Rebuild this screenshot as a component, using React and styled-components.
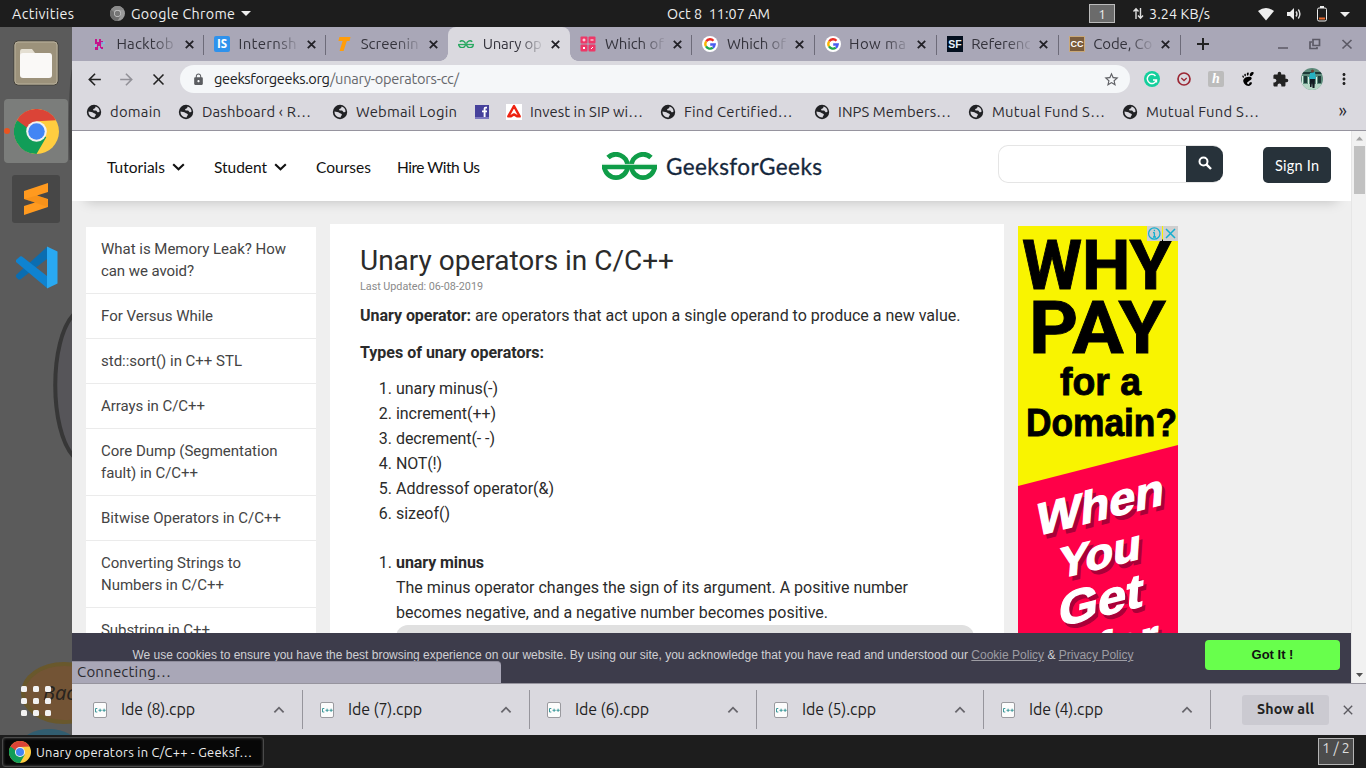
import React, { useLayoutEffect, useRef } from "react";
import styled, { createGlobalStyle, css } from "styled-components";
import {
  MdArrowBack,
  MdArrowForward,
  MdClose,
  MdAdd,
  MdLock,
  MdStarBorder,
  MdExtension,
  MdMoreVert,
} from "react-icons/md";
import { SiGnome } from "react-icons/si";

const ui = `Ubuntu, "Noto Sans", sans-serif`;
const geo = `"Sofia Pro", Lato, sans-serif`;
const c = {
  panel: "#1d1d1d",
  frame: "#a9a7b7",
  bar: "#dad9df",
  ink: "#2c2b30",
  dark: "#27323a",
};

const Global = createGlobalStyle`
  * { box-sizing: border-box; }
  body { margin: 0; width: 1366px; height: 768px; overflow: hidden; background: ${c.panel}; }
  svg { display: block; flex: none; }
`;

/* Text that tracks itself in or out to occupy a known width */
const FitSpan = styled.span`
  display: inline-block;
  justify-self: start;
  white-space: pre;
  flex: none;
`;
function Fit({ w, children }) {
  const ref = useRef(null);
  useLayoutEffect(() => {
    const el = ref.current;
    el.style.letterSpacing = "0px";
    const natural = el.getBoundingClientRect().width;
    const n = el.textContent.length;
    const gap = (w - natural) / Math.max(1, n - 1);
    el.style.letterSpacing = `${gap}px`;
    el.style.marginRight = `${-gap}px`;
  }, [w, children]);
  return <FitSpan ref={ref}>{children}</FitSpan>;
}

/* ---------- desktop ---------- */
const Desktop = styled.div`
  width: 1366px;
  height: 768px;
  display: flex;
  flex-direction: column;
  font-family: ${ui};
  overflow: hidden;
`;
const TopPanel = styled.header`
  height: 27px;
  flex: none;
  background: ${c.panel};
  color: #eee;
  font-size: 14.3px;
  display: grid;
  grid-template-columns: 98px 557px 1fr auto;
  align-items: center;
  padding: 0 14px 0 12px;
  line-height: 26px;
`;
const PanelGroup = styled.div`
  display: flex;
  align-items: center;
  gap: ${(p) => p.$gap || 0}px;
`;
const Caret = styled.i`
  width: 0;
  height: 0;
  border: 5px solid transparent;
  border-top-color: #eee;
  border-bottom: 0;
`;
const Workspace = styled.div`
  width: 26px;
  height: 19px;
  margin-right: 17px;
  border: 1px solid #bbb;
  background: #6b6b6b;
  text-align: center;
  line-height: 18px;
  font-size: 13.5px;
`;
const Middle = styled.div`
  height: 708px;
  flex: none;
  display: flex;
`;
const Dock = styled.aside`
  position: relative;
  width: 72px;
  background: #5b5b5b;
  display: flex;
  flex-direction: column;
  align-items: center;
  overflow: hidden;
`;
const Wallpaper = styled.svg`
  position: absolute;
  left: 0;
  top: 0;
`;
const DockTile = styled.div`
  position: relative;
  width: 64px;
  height: 64px;
  margin-top: 4px;
  border-radius: 4px;
  background: ${(p) => (p.$active ? "#7b7d7b" : "none")};
  display: flex;
  align-items: center;
  justify-content: center;
`;
const RunningDot = styled.i`
  position: absolute;
  left: 0;
  top: 29px;
  width: 6px;
  height: 6px;
  border-radius: 3px;
  background: #e95420;
`;
const AppsGrid = styled.div`
  position: relative;
  display: grid;
  grid-template-columns: repeat(3, 6px);
  grid-auto-rows: 6px;
  gap: 6px;
  margin: auto 0 19px;
  i { background: #f2f2f2; border-radius: 1.5px; }
`;

/* ---------- browser chrome ---------- */
const Browser = styled.main`
  width: 1294px;
  height: 708px;
  display: flex;
  flex-direction: column;
  background: ${c.bar};
`;
const TabStrip = styled.div`
  height: 34px;
  flex: none;
  background: ${c.frame};
  display: flex;
  padding-left: 10px;
`;
const TabBox = styled.div`
  position: relative;
  width: 122.1px;
  height: 34px;
  flex: none;
  display: flex;
  align-items: center;
  padding-left: 10px;
  font-size: 15px;
  color: #34333c;
  ${(p) =>
    p.$sep &&
    css`
      &::after {
        content: "";
        position: absolute;
        right: 0;
        top: 8px;
        width: 1px;
        height: 20px;
        background: #6d6b79;
      }
    `}
  ${(p) =>
    p.$active &&
    css`
      background: ${c.bar};
      border-radius: 8px 8px 0 0;
      &::before,
      &::after {
        content: "";
        position: absolute;
        bottom: 0;
        width: 8px;
        height: 8px;
      }
      &::before {
        left: -8px;
        background: radial-gradient(circle at 0 0, ${c.frame} 7.5px, ${c.bar} 8px);
      }
      &::after {
        right: -8px;
        background: radial-gradient(circle at 100% 0, ${c.frame} 7.5px, ${c.bar} 8px);
      }
    `}
`;
const TabLabel = styled.div`
  width: 59px;
  margin: 0 9px 0 8.5px;
  overflow: hidden;
  white-space: nowrap;
  line-height: 24px;
  mask-image: linear-gradient(90deg, #000 60%, transparent 105%);
`;
const NewTab = styled.div`
  margin: 8px 0 0 13px;
`;
const WindowButtons = styled.div`
  margin-left: auto;
  margin-right: 13px;
  padding-top: 11px;
`;
const Toolbar = styled.div`
  height: 36px;
  flex: none;
  display: flex;
  align-items: center;
  padding-left: 13px;
  color: #222;
`;
const NavButton = styled.div`
  width: 32px;
  height: 32px;
  display: flex;
  align-items: center;
  color: ${(p) => (p.$off ? "#929198" : "#222")};
`;
const Omnibox = styled.div`
  width: 950px;
  height: 28px;
  flex: none;
  margin: 0 6px 0 -1px;
  border-radius: 14px;
  background: #f5f7f9;
  display: flex;
  align-items: center;
  padding: 0 10px 0 12px;
  font-size: 14.6px;
  line-height: 26px;
  color: #202124;
  > :last-child { margin-left: auto; color: #5f6065; }
`;
const UrlText = styled.div`
  display: flex;
  margin-left: 9px;
  color: ${(p) => p.$color};
  & + & { margin-left: 0; }
`;
const Ext = styled.div`
  width: 32px;
  flex: none;
  display: flex;
  justify-content: center;
`;
const Honey = styled.div`
  width: 16px;
  height: 16px;
  border-radius: 2px;
  background: #bcbcbc;
  color: #fff;
  font: italic bold 14px/15px "Liberation Serif", serif;
  text-align: center;
`;
const Bookmarks = styled.div`
  height: 34px;
  flex: none;
  border-bottom: 1px solid #96949e;
  display: flex;
  align-items: flex-start;
  padding-left: 14px;
  padding-top: 4px;
  color: ${c.ink};
`;
const Bookmark = styled.div`
  height: 22px;
  display: flex;
  align-items: center;
  gap: 8px;
  margin-right: ${(p) => (p.$iconOnly ? 16 : 17)}px;
  font-size: 14.8px;
`;
const BookmarkLabel = styled.div`
  width: ${(p) => p.$w}px;
  white-space: nowrap;
  line-height: 22px;
`;
const More = styled.div`
  margin-left: auto;
  margin-right: 19px;
  font-size: 18px;
  line-height: 19px;
`;

/* ---------- web page ---------- */
const Viewport = styled.div`
  position: relative;
  height: 552px;
  flex: none;
  display: flex;
  background: #efefef;
`;
const Page = styled.div`
  width: 1279px;
  height: 552px;
  overflow: hidden;
`;
const SiteHeader = styled.div`
  position: relative;
  height: 70px;
  background: #fff;
  box-shadow: 0 14px 12px -14px rgba(0, 0, 0, 0.22);
  display: flex;
  align-items: center;
  padding: 0 20px 0 35px;
  font-family: ${geo};
  font-size: 15.5px;
  color: #111;
`;
const NavItem = styled.div`
  display: flex;
  align-items: center;
  gap: 7px;
  width: ${(p) => p.$w}px;
  padding-top: 2px;
  line-height: 24px;
`;
const Brand = styled.div`
  display: flex;
  align-items: center;
  gap: 9px;
  width: 396px;
  font-size: 22.5px;
  font-weight: 400;
  color: #15273c;
  -webkit-text-stroke: 0.3px #15273c;
`;
const SearchBox = styled.div`
  width: 225px;
  height: 38px;
  margin-top: -5px;
  border: 1px solid #e5e5e5;
  border-right-width: 0;
  border-radius: 10px;
  display: flex;
  justify-content: flex-end;
  overflow: hidden;
`;
const SearchButton = styled.div`
  width: 37px;
  height: 37px;
  margin-top: -1px;
  background: ${c.dark};
  display: flex;
  align-items: center;
  justify-content: center;
`;
const SignIn = styled.div`
  width: 68px;
  height: 36px;
  margin-left: auto;
  margin-top: -3px;
  border-radius: 5px;
  background: ${c.dark};
  color: #fff;
  text-align: center;
  line-height: 37px;
  font-size: 14.5px;
`;
const Columns = styled.div`
  display: flex;
  gap: 14px;
  padding-left: 14px;
  align-items: flex-start;
  font-family: Roboto, sans-serif;
`;
const Sidebar = styled.nav`
  width: 230px;
  margin-top: 26px;
  background: #fff;
`;
const SideLink = styled.div`
  padding: 11px 0 11px 15px;
  border-bottom: 1px solid #ebebeb;
  font-size: 15px;
  line-height: 22px;
  color: #444;
`;
const Article = styled.article`
  width: 674px;
  height: 500px;
  margin-top: 23px;
  padding: 22px 30px 0;
  background: #fff;
  color: #2b2b2b;
  font-size: 16px;
  line-height: 25px;
`;
const Title = styled.h1`
  margin: 0;
  font-size: 28px;
  font-weight: 400;
  line-height: 30px;
`;
const Updated = styled.div`
  margin-top: 4px;
  font-size: 10.8px;
  line-height: 14px;
  color: #8a8a8a;
`;
const Para = styled.p`
  margin: ${(p) => p.$top}px 0 0;
  white-space: nowrap;
`;
const List = styled.ol`
  margin: ${(p) => p.$top}px 0 0;
  padding-left: 36px;
`;
const CodeBox = styled.div`
  width: 578px;
  height: 60px;
  border-radius: 12px;
  background: #e0e0e0;
`;
const AdFrame = styled.div`
  position: relative;
  width: 160px;
  height: 420px;
  margin-top: 25px;
`;
const AdChoices = styled.div`
  position: absolute;
  top: 0;
  right: 0;
  display: flex;
  gap: 1px;
  svg { background: #cfcfcf; }
`;
const Scrollbar = styled.div`
  width: 15px;
  border-left: 1px solid #e6e6e6;
  background: #f1f1f1;
  display: flex;
  flex-direction: column;
  align-items: center;
`;
const ScrollThumb = styled.div`
  width: 11px;
  height: 48px;
  margin: 5px 0 auto;
  background: #c1c1c1;
`;
const CookieBar = styled.div`
  position: absolute;
  left: 0;
  bottom: 0;
  width: 1279px;
  height: 50px;
  background: #3d3c4b;
  color: #d0d0d4;
  font: 12px/14px "Liberation Sans", sans-serif;
  display: flex;
  padding: 7px 11px 0 60.5px;
  justify-content: space-between;
`;
const CookieText = styled.div`
  padding-top: 8px;
  u { color: #9d9ca3; }
`;
const GotIt = styled.div`
  width: 135px;
  height: 30px;
  border-radius: 4px;
  background: #68ff4c;
  color: #111;
  font-weight: bold;
  font-size: 13px;
  line-height: 30px;
  text-align: center;
`;
const Status = styled.div`
  position: absolute;
  left: 0;
  bottom: 0;
  width: 429px;
  height: 22px;
  border-radius: 0 4px 0 0;
  border-top: 1px solid #8f8d9c;
  background: ${c.frame};
  padding-left: 5px;
  font-size: 15px;
  line-height: 20px;
  color: ${c.ink};
`;

/* ---------- downloads and task bar ---------- */
const Downloads = styled.div`
  height: 52px;
  flex: none;
  border-top: 1px solid #96949e;
  display: flex;
  align-items: center;
  padding-left: 4px;
  color: #222;
`;
const Download = styled.div`
  width: 227px;
  height: 39px;
  border-right: 1px solid #96959c;
  display: flex;
  align-items: center;
  padding: 0 17px;
  font-size: 16px;
  line-height: 20px;
  > span { margin: -2px 0 0 14px; }
  > svg:last-child { margin-left: auto; }
`;
const ShowAll = styled.div`
  width: 87px;
  height: 30px;
  margin: 0 11px 0 31px;
  border-radius: 3px;
  background: #cbcad1;
  font-size: 14.3px;
  font-weight: 600;
  line-height: 28px;
  text-align: center;
`;
const TaskBar = styled.footer`
  height: 33px;
  background: ${c.panel};
  display: flex;
  justify-content: space-between;
  padding: 2px 12px 0 2px;
`;
const Task = styled.div`
  width: 262px;
  height: 30px;
  border: 1px solid #4a4a4a;
  border-radius: 3px;
  background: #070707;
  box-shadow: inset 0 0 3px #555;
  color: #eee;
  display: flex;
  align-items: center;
  gap: 5px;
  padding-left: 6px;
  font-size: 12.9px;
`;
const Pager = styled.div`
  width: 36px;
  height: 27px;
  margin-top: 1px;
  border: 1px solid #b5b5b5;
  background: #4c4c4c;
  color: #ddd;
  font-size: 14px;
  line-height: 19px;
  text-align: center;
`;

/* ---------- drawings ---------- */
const ChromeLogo = ({ size, mono }) => (
  <svg width={size} height={size} viewBox="0 0 48 48">
    <circle cx="24" cy="24" r="24" fill={mono ? "#9a9a9a" : "#ffcd40"} />
    <path d="M24 24L3.2 12A24 24 0 0 0 24 48L34.4 30Z" fill={mono ? "#6e6e6e" : "#119d58"} />
    <path d="M24 24H13.6L3.2 12A24 24 0 0 1 44.8 12L24 13Z" fill={mono ? "#8a8a8a" : "#db4437"} />
    <path d="M13.6 30L3.2 12L14 20Z" fill={mono ? "#6e6e6e" : "#119d58"} />
    <circle cx="24" cy="24" r="11" fill={mono ? "#ccc" : "#f1f1f1"} />
    <circle cx="24" cy="24" r="8.8" fill={mono ? "#777" : "#4285f4"} />
  </svg>
);
const Gfg = ({ w, h, color = "#0f9d48", weight = 4.8 }) => (
  <svg width={w} height={h} viewBox="0 0 55 28">
    <g fill="none" stroke={color} strokeWidth={weight}>
      <path d="M6 5.6A11.6 11.6 0 0 1 25.6 14A11.6 11.6 0 0 1 2.4 14" />
      <path d="M49 5.6A11.6 11.6 0 0 0 29.4 14A11.6 11.6 0 0 0 52.6 14" />
    </g>
    <path d="M0 12.8H55V17.2H0Z" fill={color} />
    <path d="M0 12.4H55" stroke="#b9e2c8" />
  </svg>
);
const GoogleG = () => (
  <svg width="16" height="16" viewBox="0 0 16 16">
    <circle cx="8" cy="8" r="8" fill="#fff" />
    <g fill="none" strokeWidth="2.3">
      <path d="M11.5 4.7A4.7 4.7 0 0 0 4.2 5.3" stroke="#ea2f25" />
      <path d="M4.2 5.3A4.7 4.7 0 0 0 4 10.4" stroke="#fbb500" />
      <path d="M4 10.4A4.7 4.7 0 0 0 10.8 11.8" stroke="#20a94c" />
      <path d="M10.8 11.8A4.7 4.7 0 0 0 12.7 8.5H8.2" stroke="#4a5cf0" />
    </g>
  </svg>
);
const Favicon = ({ kind }) => {
  if (kind === "gfg") return <Gfg w={16} h={8.5} color="#20a45b" />;
  if (kind === "google") return <GoogleG />;
  return (
    <svg width="16" height="16" viewBox="0 0 16 16">
      {kind === "hack" && (
        <>
          <path d="M3 3H5V6H7V3H9V5H11V8H9V11H11V13H8V10H6V14H3V11H5V8H3Z" fill="#c4158c" />
          <path d="M9 7H13M7 13H9M2 10H4M10 9H11" stroke="#7bc6ea" strokeWidth="1.4" />
        </>
      )}
      {kind === "is" && (
        <>
          <rect width="16" height="16" rx="2" fill="#2f92ec" />
          <text x="8" y="12.2" textAnchor="middle" fontSize="11.5" fontWeight="700" fontFamily="Open Sans" fill="#fff">IS</text>
        </>
      )}
      {kind === "t" && <path d="M3.5 1H14.5L13.5 5H10.8L7.6 15H3.6L6.6 5H2.4Z" fill="#ff9d0a" />}
      {kind === "calc" && (
        <>
          <g fill="#ee3767">
            <rect x=".5" y=".5" width="7" height="7" rx="1" />
            <rect x="8.5" y=".5" width="7" height="7" rx="1" />
            <rect x=".5" y="8.5" width="7" height="7" rx="1" />
            <rect x="8.5" y="8.5" width="7" height="7" rx="1" />
          </g>
          <path d="M2.5 4H5.5M4 2.5V5.5M10.5 4H13.5M3 11L5 13M5 11L3 13M11 13L13 11" stroke="#fff" />
        </>
      )}
      {kind === "sf" && (
        <>
          <rect width="16" height="16" fill="#04101f" />
          <text x="8" y="11.6" textAnchor="middle" fontSize="10.5" fontWeight="700" fontFamily="Liberation Sans" fill="#e6f2fb">SF</text>
        </>
      )}
      {kind === "cc" && (
        <>
          <rect x=".5" y=".5" width="15" height="15" fill="#7a5c3c" stroke="#c9a878" />
          <text x="8" y="10.8" textAnchor="middle" fontSize="9" fontWeight="700" fontFamily="Liberation Sans" fill="#fff">CC</text>
        </>
      )}
    </svg>
  );
};
const TabClose = () => (
  <svg width="9" height="9" viewBox="0 0 9 9" stroke="#222127" strokeWidth="1.8">
    <path d="M.8.8L8.2 8.2M8.2.8L.8 8.2" />
  </svg>
);
const Globe = () => (
  <svg width="16" height="16" viewBox="0 0 16 16">
    <circle cx="8" cy="8" r="7.2" fill="#202124" />
    <path d="M9.6 2.6C12 3.2 13.5 5.3 13.6 7.6C12.8 8.6 11.5 8.4 11 7.4C10.4 6.4 9.2 6.6 8 6.5C6.8 6.4 6.8 5.2 7.8 4.8C8.8 4.5 9.6 3.8 9.6 2.6Z" fill={c.bar} />
    <path d="M2.5 7.6C4 8.2 6.4 8 7.2 8.8C8 9.7 9.8 9.4 9.9 10.6C9.9 11.8 8.8 12 8.6 13.5C5.2 13.7 2.4 11.2 2.5 7.6Z" fill={c.bar} />
  </svg>
);
const Magnifier = () => (
  <svg width="14" height="14" viewBox="0 0 14 14" fill="none" stroke="#fff" strokeWidth="2">
    <circle cx="5.5" cy="5.5" r="4" />
    <path d="M8.4 8.4L13 13" strokeWidth="2.4" />
  </svg>
);
const Chevron = ({ up }) => (
  <svg width={up ? 12 : 13} height="8" viewBox="0 0 13 8" fill="none">
    <path
      d={up ? "M1.5 6.5L6.5 1.5L11.5 6.5" : "M1.2 1.2L6.5 6.3L11.8 1.2"}
      stroke={up ? "#66656b" : "#111"}
      strokeWidth={up ? 1.9 : 2.1}
    />
  </svg>
);
const CppIcon = () => (
  <svg width="14" height="16" viewBox="0 0 14 16">
    <rect x=".5" y=".5" width="13" height="15" rx="1.5" fill="#fcfcfc" stroke="#9a9a9f" />
    <path d="M4.3 6.5H2.5V10H4.3M5.5 8.3H8.7M7.1 6.7V9.9M9.5 8.3H12.7M11.1 6.7V9.9" fill="none" stroke="#3e9a9c" />
  </svg>
);

function TopBar() {
  return (
    <TopPanel>
      <Fit w={62}>Activities</Fit>
      <PanelGroup $gap={6}>
        <ChromeLogo size={15} mono />
        <Fit w={104}>Google Chrome</Fit>
        <Caret />
      </PanelGroup>
      <Fit w={103}>Oct 8  11:07 AM</Fit>
      <PanelGroup>
        <Workspace>1</Workspace>
        <PanelGroup $gap={4}>
          <svg width="13" height="13" viewBox="0 0 13 13" fill="none" stroke="#e0e0e0" strokeWidth="1.4">
            <path d="M4 12V2M1.5 4.5L4 1.7L6.5 4.5M8.5 1V11M6 8.5L8.5 11.3L11 8.5" />
          </svg>
          <Fit w={61}>3.24 KB/s</Fit>
        </PanelGroup>
        <svg width="142" height="20" viewBox="0 0 142 20" fill="#eee">
          <path d="M48 7Q56 1 64 7L56 16.5Z" />
          <path d="M77 8H80L84 4V16L80 12H77Z" />
          <path d="M86 7.5Q88 10 86 12.5M88.3 5.5Q91.5 10 88.3 14.5" fill="none" stroke="#ddd" strokeWidth="1.4" />
          <rect x="107.5" y="4" width="9" height="13" rx="1.5" fill="none" stroke="#eee" />
          <path d="M110 2H114V4H110Z" />
          <path d="M109 13.5H115V15.5H109Z" fill="#e8692c" />
          <path d="M130 8H140L135 13Z" />
        </svg>
      </PanelGroup>
    </TopPanel>
  );
}

function SideDock() {
  return (
    <Dock>
      <Wallpaper width="72" height="708" viewBox="0 27 72 708">
        <path d="M74 314C49 340 49 430 74 457" fill="#565559" stroke="#373737" strokeWidth="4" />
        <path d="M73 70Q69 100 71 160" stroke="#444" strokeWidth="3" fill="none" />
        <ellipse cx="64" cy="693" rx="41" ry="29" fill="#735435" stroke="#69582c" strokeWidth="4" />
        <ellipse cx="49" cy="745" rx="28" ry="16" fill="#315d70" />
        <text x="43" y="700" fontFamily="Noto Sans" fontSize="20" fontStyle="italic" fill="#29241f">Bac</text>
      </Wallpaper>
      <DockTile>
        <svg width="46" height="46" viewBox="0 0 46 46">
          <rect x="1" y="1" width="44" height="44" rx="4" fill="#9c927b" stroke="#45423b" />
          <rect x="2" y="2" width="42" height="42" rx="3" fill="none" stroke="#b9b19d" />
          <path d="M7 12Q7 9 9 9H19L22 13H36Q38 13 38 15V22H7Z" fill="#e4dfd2" />
          <rect x="7" y="13" width="32" height="25" rx="3" fill="#faf9f7" />
        </svg>
      </DockTile>
      <DockTile $active>
        <RunningDot />
        <ChromeLogo size={45} />
      </DockTile>
      <DockTile>
        <svg width="48" height="48" viewBox="0 0 48 48">
          <rect width="48" height="48" rx="3" fill="#474747" />
          <path d="M12 16L36 8V17L25 20.5L36 24V32L12 40V31L23 27.5L12 24Z" fill="#ff9a1f" />
          <path d="M12 24L36 32V26Q36 24.5 34 23.5L25 20.5Z" fill="#e88412" opacity=".35" />
        </svg>
      </DockTile>
      <DockTile>
        <svg width="43" height="43" viewBox="0 0 43 43">
          <path d="M1 29L32 1V13L6 33Q4 34 3 33L1 31Z" fill="#0b6db0" />
          <path d="M1 14L5 10.5Q6 10 7 10.5L32 30V42L1 16Z" fill="#0f83d0" />
          <path d="M32 .5L42.5 5.5V37.5L32 42.5Z" fill="#29a9f2" />
        </svg>
      </DockTile>
      <AppsGrid>{Array.from({ length: 9 }, (_, i) => <i key={i} />)}</AppsGrid>
    </Dock>
  );
}

const tabs = [
  ["hack", "Hacktob", 57, true],
  ["is", "Internsh", 58, true],
  ["t", "Screenin", 58],
  ["gfg", "Unary op", 59, false, true],
  ["calc", "Which of", 59, true],
  ["google", "Which of", 59, true],
  ["google", "How ma", 57, true],
  ["sf", "Referenc", 60, true],
  ["cc", "Code, Co", 59, true],
];

const bookmarks = [
  ["globe", "domain", 51, 51],
  ["globe", "Dashboard ‹ R…", 109, 113],
  ["globe", "Webmail Login", 101, 101],
  ["fb"],
  ["sip", "Invest in SIP wi…", 113, 113],
  ["globe", "Find Certified…", 108, 113],
  ["globe", "INPS Members…", 113, 113],
  ["globe", "Mutual Fund S…", 113, 113],
  ["globe", "Mutual Fund S…", 113, 113],
];

function BookmarkIcon({ kind }) {
  if (kind === "globe") return <Globe />;
  return (
    <svg width="16" height="16" viewBox="0 0 16 16">
      {kind === "fb" ? (
        <>
          <rect x="1" y="1" width="14" height="14" fill="#46419b" />
          <path d="M1 13H15V15H1Z" fill="#7d79c0" />
          <path d="M13 3.6H11.6Q10.6 3.6 10.6 4.8V13M8 7.4H13" fill="none" stroke="#fff" strokeWidth="1.9" />
        </>
      ) : (
        <>
          <rect width="16" height="16" fill="#fff" />
          <path d="M8 2L2.3 12.4H4.6L8 10.4L11.4 12.4H13.7Z" fill="none" stroke="#ee2211" strokeWidth="2.4" strokeLinejoin="round" />
        </>
      )}
    </svg>
  );
}

function BrowserChrome() {
  return (
    <>
      <TabStrip>
        {tabs.map(([icon, label, w, sep, active], i) => (
          <TabBox key={i} $sep={sep} $active={active}>
            <Favicon kind={icon} />
            <TabLabel><Fit w={w}>{label}</Fit></TabLabel>
            <TabClose />
          </TabBox>
        ))}
        <NewTab>
          <svg width="18" height="18" viewBox="0 0 18 18" stroke="#222" strokeWidth="2">
            <path d="M9 3V15M3 9H15" />
          </svg>
        </NewTab>
        <WindowButtons>
          <svg width="76" height="12" viewBox="0 0 76 12" fill="none" stroke="#5c5a66" strokeWidth="1.7">
            <path d="M1 10H11M65.5 2L74.5 10.5M74.5 2L65.5 10.5" />
            <path d="M36 1.5H42.5V7.5H36ZM35 4H33V10.5H40V9" />
          </svg>
        </WindowButtons>
      </TabStrip>
      <Toolbar>
        <NavButton><MdArrowBack size={19} /></NavButton>
        <NavButton $off><MdArrowForward size={19} /></NavButton>
        <NavButton><MdClose size={19} /></NavButton>
        <Omnibox>
          <MdLock size={13} color="#5b5d61" />
          <UrlText $color="#202124"><Fit w={116}>geeksforgeeks.org</Fit></UrlText>
          <UrlText $color="#66686c"><Fit w={129}>/unary-operators-cc/</Fit></UrlText>
          <MdStarBorder size={17} />
        </Omnibox>
        <Ext>
          <svg width="16" height="16" viewBox="0 0 16 16" fill="none" stroke="#fff" strokeWidth="1.4">
            <circle cx="8" cy="8" r="8" fill="#13cf9c" stroke="none" />
            <path d="M11.5 5A4.6 4.6 0 1 0 12.4 9H9M12.5 8.5V11.5" />
          </svg>
        </Ext>
        <Ext>
          <svg width="14" height="14" viewBox="0 0 14 14" fill="none" stroke="#9c2734">
            <circle cx="7" cy="7" r="6" strokeWidth="1.7" />
            <path d="M4.3 6L7 8.5L9.7 6" strokeWidth="1.3" />
          </svg>
        </Ext>
        <Ext><Honey>h</Honey></Ext>
        <Ext><SiGnome size={14} color="#000" /></Ext>
        <Ext><MdExtension size={17} /></Ext>
        <Ext>
          <svg width="22" height="22" viewBox="0 0 22 22">
            <defs><clipPath id="face"><circle cx="11" cy="11" r="11" /></clipPath></defs>
            <g clipPath="url(#face)">
              <rect width="22" height="22" fill="#5d8c7c" />
              <path d="M0 4H22V6H0ZM3 8H6V15H3ZM17 8H20V15H17Z" fill="#1d3b38" />
              <path d="M1 8H2V16H1ZM7 9H8V16H7ZM15 9H16V16H15Z" fill="#d7ece2" />
              <path d="M0 16H22V22H0Z" fill="#b5d5c5" />
              <path d="M9 5L14 4L15 11H8Z" fill="#27b2c2" />
              <path d="M9 11H14L13.5 20H11.5L11 14L10.5 19H9Z" fill="#141a22" />
              <circle cx="11.5" cy="3" r="1.6" fill="#6b4638" />
            </g>
          </svg>
        </Ext>
        <Ext><MdMoreVert size={18} /></Ext>
      </Toolbar>
      <Bookmarks>
        {bookmarks.map(([icon, label, w, box], i) => (
          <Bookmark key={i} $iconOnly={!label}>
            <BookmarkIcon kind={icon} />
            {label && <BookmarkLabel $w={box}><Fit w={w}>{label}</Fit></BookmarkLabel>}
          </Bookmark>
        ))}
        <More>»</More>
      </Bookmarks>
    </>
  );
}

const sideLinks = [
  [["What is Memory Leak? How", 185], ["can we avoid?", 93]],
  [["For Versus While", 112]],
  [["std::sort() in C++ STL", 141]],
  [["Arrays in C/C++", 104]],
  [["Core Dump (Segmentation", 176.5], ["fault) in C/C++", 97]],
  [["Bitwise Operators in C/C++", 180]],
  [["Converting Strings to", 140], ["Numbers in C/C++", 123]],
  [["Substring in C++", 109]],
];
const operators = [
  ["unary minus(-)", 102],
  ["increment(++)", 100],
  ["decrement(- -)", 99],
  ["NOT(!)", 46],
  ["Addressof operator(&)", 158],
  ["sizeof()", 54],
];

function Ad() {
  const tilted = [
    ["When", 18, 310, 127, 46],
    ["You", 40, 353, 82, 44],
    ["Get", 40, 401, 84, 48],
    ["for", 76, 441, 63, 47],
  ];
  return (
    <AdFrame>
      <svg width="160" height="420" viewBox="0 0 160 420" fontFamily="Liberation Sans" fontWeight="700">
        <rect width="160" height="420" fill="#f9f400" />
        <path d="M0 260L160 219V420H0Z" fill="#ff0048" />
        <g fill="#000" stroke="#000" strokeWidth=".9">
          <text x="4" y="62.5" fontSize="69" textLength="150" lengthAdjust="spacingAndGlyphs" fontFamily="Roboto">WHY</text>
          <text x="11" y="127" fontSize="73" textLength="137" lengthAdjust="spacingAndGlyphs" fontFamily="Roboto">PAY</text>
          <text x="42" y="169" fontSize="38" textLength="81" lengthAdjust="spacingAndGlyphs">for a</text>
          <text x="8" y="210" fontSize="39" textLength="151" lengthAdjust="spacingAndGlyphs">Domain?</text>
        </g>
        {tilted.map(([word, x, y, len, size]) => (
          <g key={word} fontSize={size} strokeWidth="1.3">
            <text transform={`matrix(1 -.25 -.07 1 ${x + 3} ${y + 4})`} textLength={len} lengthAdjust="spacingAndGlyphs" fill="#a90038" stroke="#a90038">{word}</text>
            <text transform={`matrix(1 -.25 -.07 1 ${x} ${y})`} textLength={len} lengthAdjust="spacingAndGlyphs" fill="#fff" stroke="#fff">{word}</text>
          </g>
        ))}
      </svg>
      <AdChoices>
        <svg width="15" height="15" viewBox="0 0 15 15" fill="none" stroke="#13aed0" strokeWidth="1.3">
          <circle cx="7.3" cy="7.5" r="5.7" />
          <path d="M7.4 6.5V11M7.4 3.8V5.2M6 11H9M6 6.7H7.5" />
        </svg>
        <svg width="15" height="15" viewBox="0 0 15 15" stroke="#13aed0" strokeWidth="1.5">
          <path d="M3 3L12 12M12 3L3 12" />
        </svg>
      </AdChoices>
    </AdFrame>
  );
}

function WebPage() {
  return (
    <Viewport>
      <Page>
        <SiteHeader>
          <NavItem $w={107}><Fit w={58}>Tutorials</Fit><Chevron /></NavItem>
          <NavItem $w={102}><Fit w={53}>Student</Fit><Chevron /></NavItem>
          <NavItem $w={81}><Fit w={55}>Courses</Fit></NavItem>
          <NavItem $w={205}><Fit w={83}>Hire With Us</Fit></NavItem>
          <Brand><Gfg w={55} h={28} /><Fit w={156}>GeeksforGeeks</Fit></Brand>
          <SearchBox><SearchButton><Magnifier /></SearchButton></SearchBox>
          <SignIn><Fit w={44}>Sign In</Fit></SignIn>
        </SiteHeader>
        <Columns>
          <Sidebar>
            {sideLinks.map((lines, i) => (
              <SideLink key={i}>
                {lines.map(([t, w]) => <div key={t}><Fit w={w}>{t}</Fit></div>)}
              </SideLink>
            ))}
          </Sidebar>
          <Article>
            <Title><Fit w={314}>Unary operators in C/C++</Fit></Title>
            <Updated><Fit w={123}>Last Updated: 06-08-2019</Fit></Updated>
            <Para $top={9}>
              <b><Fit w={111}>Unary operator:</Fit></b>{" "}
              <Fit w={485.5}>are operators that act upon a single operand to produce a new value.</Fit>
            </Para>
            <Para $top={12}><b><Fit w={184}>Types of unary operators:</Fit></b></Para>
            <List $top={11}>
              {operators.map(([t, w]) => <li key={t}><Fit w={w}>{t}</Fit></li>)}
            </List>
            <List $top={24}>
              <li>
                <b><Fit w={88}>unary minus</Fit></b>
                <div><Fit w={512}>The minus operator changes the sign of its argument. A positive number</Fit></div>
                <div><Fit w={432}>becomes negative, and a negative number becomes positive.</Fit></div>
                <CodeBox />
              </li>
            </List>
          </Article>
          <Ad />
        </Columns>
      </Page>
      <Scrollbar>
        <svg width="15" height="10" viewBox="0 0 15 10"><path d="M4 9.5L7.5 5.5L11 9.5Z" fill="#a3a3a3" /></svg>
        <ScrollThumb />
        <svg width="15" height="14" viewBox="0 0 15 14"><path d="M4 4L7.5 8L11 4Z" fill="#505050" /></svg>
      </Scrollbar>
      <CookieBar>
        <CookieText>
          <Fit w={835.5}>We use cookies to ensure you have the best browsing experience on our website. By using our site, you acknowledge that you have read and understood our</Fit>{" "}
          <u>Cookie Policy</u> &amp; <u>Privacy Policy</u>
        </CookieText>
        <GotIt>Got It !</GotIt>
      </CookieBar>
      <Status><Fit w={94}>Connecting…</Fit></Status>
    </Viewport>
  );
}

export default function App() {
  return (
    <Desktop>
      <Global />
      <TopBar />
      <Middle>
        <SideDock />
        <Browser>
          <BrowserChrome />
          <WebPage />
          <Downloads>
            {[8, 7, 6, 5, 4].map((n) => (
              <Download key={n}>
                <CppIcon />
                <Fit w={74}>{`Ide (${n}).cpp`}</Fit>
                <Chevron up />
              </Download>
            ))}
            <ShowAll><Fit w={57}>Show all</Fit></ShowAll>
            <MdClose size={16} color="#5b5a60" />
          </Downloads>
        </Browser>
      </Middle>
      <TaskBar>
        <Task>
          <ChromeLogo size={22} />
          <Fit w={216}>Unary operators in C/C++ - Geeksf…</Fit>
        </Task>
        <Pager>1 / 2</Pager>
      </TaskBar>
    </Desktop>
  );
}
